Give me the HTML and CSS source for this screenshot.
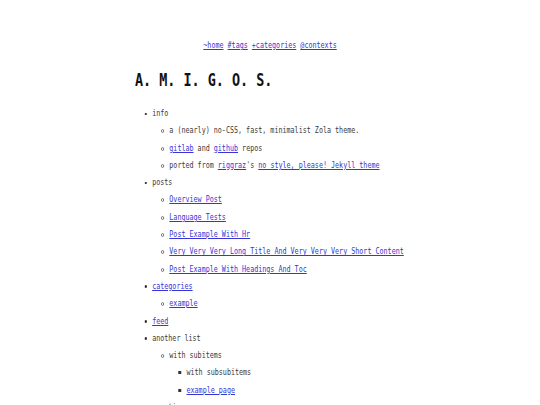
FILE: index.html
```html
<!DOCTYPE html>
<html>
<head>
<meta charset="utf-8">
<link rel="stylesheet" href="styles.css">
</head>
<body>
<div class="wrap">
<div class="inner">
<nav class="nav"><a href="#">~home</a> <a href="#">#tags</a> <a href="#">+categories</a> <a href="#">@contexts</a></nav>
<h1 class="title">A. M. I. G. O. S.</h1>
<ul class="l1">
  <li>info
    <ul class="l2">
      <li>a (nearly) no-CSS, fast, minimalist Zola theme.</li>
      <li><a href="#">gitlab</a> and <a href="#">github</a> repos</li>
      <li>ported from <a href="#">riggraz</a>'s <a href="#">no style, please! Jekyll theme</a></li>
    </ul>
  </li>
  <li>posts
    <ul class="l2">
      <li><a href="#">Overview Post</a></li>
      <li><a href="#">Language Tests</a></li>
      <li><a href="#">Post Example With Hr</a></li>
      <li><a href="#">Very Very Very Long Title And Very Very Very Short Content</a></li>
      <li><a href="#">Post Example With Headings And Toc</a></li>
    </ul>
  </li>
  <li><a href="#">categories</a>
    <ul class="l2">
      <li><a href="#">example</a></li>
    </ul>
  </li>
  <li><a href="#">feed</a></li>
  <li>another list
    <ul class="l2">
      <li>with subitems
        <ul class="l3">
          <li>with subsubitems</li>
          <li><a href="#">example page</a></li>
        </ul>
      </li>
    </ul>
  </li>
  <li>pro tip</li>
</ul>
</div>
</div>
</body>
</html>
```
FILE: styles.css
```css
html, body {
  margin: 0;
  padding: 0;
  background: #fff;
}
body {
  font-family: "DejaVu Sans Mono", monospace;
  color: #3a3a3a;
  font-size: 9px;
  overflow: hidden;
  height: 405px;
}
.wrap {
  width: 270px;
  margin: 0 auto;
}
.inner {
  width: 362px;
  transform: scaleX(0.746);
  transform-origin: 0 0;
}
a {
  color: #3535d8;
  text-decoration: underline;
}
.nav {
  text-align: center;
  line-height: 17px;
  padding-top: 37px;
  font-size: 9px;
}
.title {
  font-size: 18px;
  line-height: 24px;
  font-weight: bold;
  color: #111;
  margin: 14px 0 13px 0;
}
ul {
  list-style: none;
  margin: 0;
  padding: 0;
}
li {
  line-height: 17.3px;
  position: relative;
}
.l1 > li,
.l2 > li,
.l3 > li {
  padding-left: 23px;
}
.l1 > li::before,
.l2 > li::before,
.l3 > li::before {
  content: "";
  position: absolute;
}
.l1 > li::before {
  left: 13px;
  top: 7.5px;
  width: 3px;
  height: 2.5px;
  border-radius: 50%;
  background: #333;
}
.l2 > li::before {
  left: 12px;
  top: 7px;
  width: 2px;
  height: 2px;
  border: 1px solid #666;
  border-radius: 50%;
}
.l3 > li::before {
  left: 12px;
  top: 7px;
  width: 4px;
  height: 3px;
  background: #333;
}
```
